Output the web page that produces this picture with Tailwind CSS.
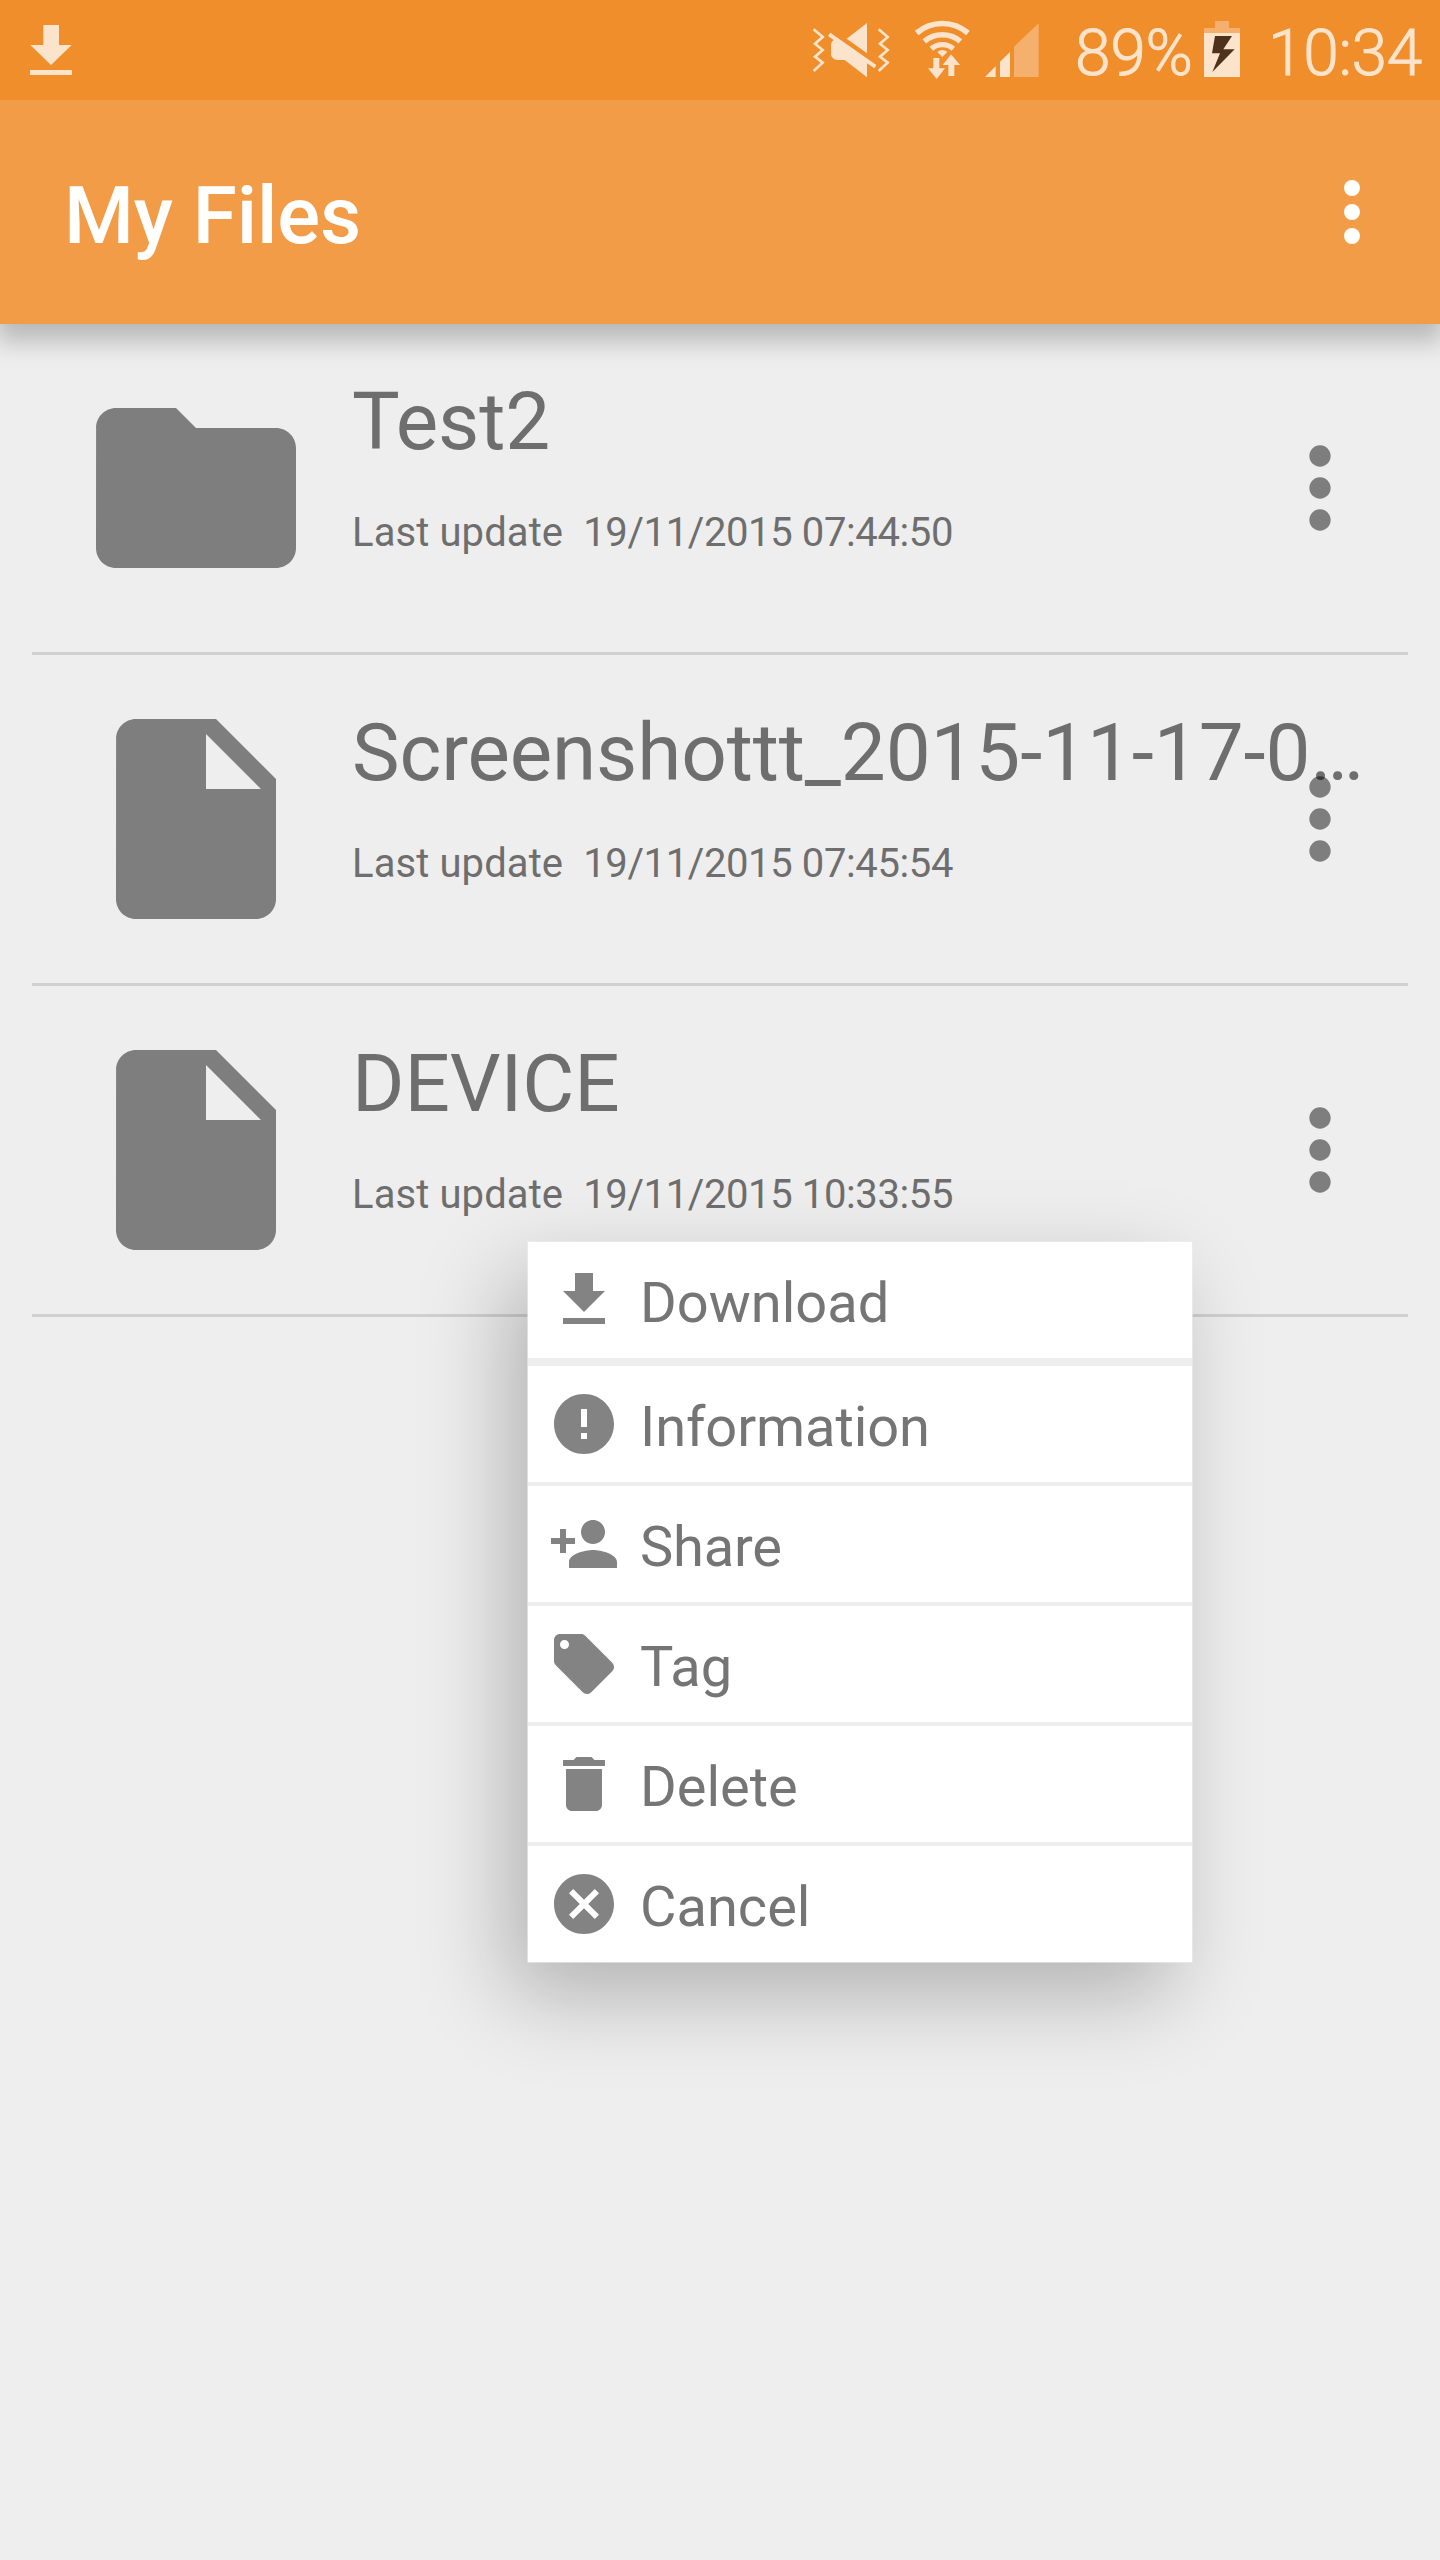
<!DOCTYPE html>
<html lang="en">
<head>
<meta charset="utf-8">
<title>My Files</title>
<script src="https://cdn.jsdelivr.net/npm/@tailwindcss/browser@4"></script>
</head>
<body class="bg-[#eeeeee] font-['Roboto',sans-serif]">
<svg class="hidden">
  <symbol id="file" viewBox="0 0 24 24"><path d="M6 2c-1.1 0-1.99.9-1.99 2L4 20c0 1.1.89 2 1.99 2H18c1.1 0 2-.9 2-2V8l-6-6H6zm7 7V3.5L18.5 9H13z"/></symbol>
  <symbol id="more" viewBox="0 0 24 24"><circle cx="12" cy="6" r="2"/><circle cx="12" cy="12" r="2"/><circle cx="12" cy="18" r="2"/></symbol>
</svg>
<div class="relative w-[1440px] h-[2560px] overflow-hidden">
  <header class="relative z-10 shadow-[0_13px_24px_4px_rgba(0,0,0,0.23)]">
    <div class="flex h-[100px] items-center bg-[#f08e2b] text-[#fce3cb]">
      <svg class="ml-[30px] w-[42px] h-[60px]" viewBox="90 60 126 180" fill="currentColor"><path d="M130 75h47v60h38l-62 60-62-60h39zM90 210h126v15H90z"/></svg>
      <svg class="ml-auto w-[78px] h-[60px]" viewBox="66 60 234 180" fill="currentColor">
        <path fill="none" stroke="currentColor" stroke-width="8" d="M71 88l27 23-23 20 23 19-23 20 23 18-27 25M266 88l27 23-23 20 23 19-23 20 23 18-27 25"/>
        <path d="M231 69v91l-61-44zM121 98l138 97-6 10-22-15v42l-67-52h-20c-14 0-21-8-21-20v-24c0-7 3-12 8-16l-17-12z"/>
      </svg>
      <svg class="ml-6 w-14 h-[60px]" viewBox="372 60 168 180" fill="none" stroke="currentColor">
        <path stroke-width="17" d="M380 99a118 118 0 0 1 154 0M403 124a84 84 0 0 1 108 0"/>
        <path stroke-width="16" d="M424 146a51 51 0 0 1 66 0"/>
        <path stroke="none" fill="currentColor" d="M442 156q15-12 30 0l-15 15zM430 174h18v31h17l-25 32-26-32h16zM475 228v-33h-17l25-32 27 32h-17v33z"/>
      </svg>
      <svg class="ml-[14px] w-14 h-[60px]" viewBox="582 60 168 180" fill="currentColor"><path d="M585 231l32-32v32zM630 231v-46l30-29v75z"/><path fill="#f6b06d" d="M672 231v-91l74-70v161z"/></svg>
      <span class="w-[164px] pl-[35px] pt-2 text-[64px] leading-[76px] font-light tracking-[-0.2px] [-webkit-text-stroke:1px_#fce3cb]">89%</span>
      <svg class="w-9 h-[60px]" viewBox="492 60 108 180"><path fill="#f6b06d" d="M525 63h42v21h33v15H492V84h33z"/><path fill="#fce3cb" d="M492 99h108v132H492z"/><path fill="#4e331a" d="M525 108h51l-26 40h34l-67 68 23-56h-24z"/></svg>
      <span class="w-[200px] pl-[28px] pt-2 text-[64px] leading-[76px] font-light tracking-[-0.3px] [-webkit-text-stroke:1px_#fce3cb]">10:34</span>
    </div>
    <div class="flex h-[224px] items-center justify-between bg-[#f29c47] pl-16 pr-[40px] text-white">
      <h1 class="pt-2 text-[80px] leading-[96px] font-medium tracking-[-0.1px]">My Files</h1>
      <svg class="w-24 h-24" viewBox="0 0 24 24" fill="currentColor"><use href="#more"/></svg>
    </div>
  </header>

  <main class="px-8 text-[#6e6e6e]">
    <div class="flex h-[331px] border-b-[3px] border-[#d0d0d0] pl-11">
      <svg class="mt-11 w-[240px] h-[240px] shrink-0 text-[#7e7e7e]" viewBox="0 0 24 24" fill="currentColor"><path d="M10 4H4c-1.1 0-1.99.9-1.99 2L2 18c0 1.1.9 2 2 2h16c1.1 0 2-.9 2-2V8c0-1.1-.9-2-2-2h-8l-2-2z"/></svg>
      <div class="ml-9 w-[1012px] shrink-0 pt-[50px]">
        <div class="text-[80px] leading-[96px] tracking-[-0.12px]">Test2</div>
        <div class="mt-[39px] text-[40px] leading-[48px] whitespace-pre tracking-[0.1px]">Last update  <span class="tracking-[-0.38px]">19/11/2015 07:44:50</span></div>
      </div>
      <svg class="-ml-[108px] mt-[100px] w-32 h-32 shrink-0 fill-black/47"><use href="#more"/></svg>
    </div>
    <div class="flex h-[331px] border-b-[3px] border-[#d0d0d0] pl-11">
      <svg class="mt-11 w-[240px] h-[240px] shrink-0 fill-[#7e7e7e]"><use href="#file"/></svg>
      <div class="ml-9 w-[1012px] shrink-0 pt-[50px]">
        <div class="text-[80px] leading-[96px] tracking-[-0.12px]">Screenshottt_2015-11-17-0…</div>
        <div class="mt-[39px] text-[40px] leading-[48px] whitespace-pre tracking-[0.1px]">Last update  <span class="tracking-[-0.38px]">19/11/2015 07:45:54</span></div>
      </div>
      <svg class="-ml-[108px] mt-[100px] w-32 h-32 shrink-0 fill-black/47"><use href="#more"/></svg>
    </div>
    <div class="flex h-[331px] border-b-[3px] border-[#d0d0d0] pl-11">
      <svg class="mt-11 w-[240px] h-[240px] shrink-0 fill-[#7e7e7e]"><use href="#file"/></svg>
      <div class="ml-9 w-[1012px] shrink-0 pt-[50px]">
        <div class="text-[80px] leading-[96px] tracking-[-0.12px]">DEVICE</div>
        <div class="mt-[39px] text-[40px] leading-[48px] whitespace-pre tracking-[0.1px]">Last update  <span class="tracking-[-0.38px]">19/11/2015 10:33:55</span></div>
      </div>
      <svg class="-ml-[108px] mt-[100px] w-32 h-32 shrink-0 fill-black/47"><use href="#more"/></svg>
    </div>
  </main>

  <ul class="absolute left-[528px] top-[1242px] z-20 w-[664px] bg-white text-[56px] leading-[66px] text-[#757575] shadow-[0_0_0_1px_rgba(238,238,238,0.6),-20px_33px_82px_rgba(0,0,0,0.255)]">
    <li class="flex h-[124px] items-center gap-5 border-b-8 border-[#eeeeee] pl-5">
      <svg class="w-[72px] h-[72px] fill-[#838383]" viewBox="0 0 24 24"><path d="M19 9h-4V3H9v6H5l7 7 7-7zM5 18v2h14v-2H5z"/></svg>
      <span class="pt-1.5">Download</span>
    </li>
    <li class="flex h-[120px] items-center gap-5 border-b-4 border-[#eeeeee] pl-5">
      <svg class="w-[72px] h-[72px] fill-[#838383]" viewBox="0 0 24 24"><path d="M12 2C6.480 2 2 6.480 2 12s4.480 10 10 10 10-4.480 10-10S17.520 2 12 2zm1 15h-2v-2h2v2zm0-4h-2V7h2v6z"/></svg>
      <span class="pt-1.5 tracking-[-0.1px]">Information</span>
    </li>
    <li class="flex h-[120px] items-center gap-5 border-b-4 border-[#eeeeee] pl-5">
      <svg class="w-[72px] h-[72px] fill-[#838383]" viewBox="0 0 24 24"><path d="M15 12c2.210 0 4-1.790 4-4s-1.790-4-4-4-4 1.790-4 4 1.790 4 4 4zm-9-2V7H4v3H1v2h3v3h2v-3h3v-2H6zm9 4c-2.670 0-8 1.340-8 4v2h16v-2c0-2.660-5.330-4-8-4z"/></svg>
      <span class="pt-1.5 tracking-[-0.2px]">Share</span>
    </li>
    <li class="flex h-[120px] items-center gap-5 border-b-4 border-[#eeeeee] pl-5">
      <svg class="w-[72px] h-[72px] fill-[#838383]" viewBox="0 0 24 24"><path d="M21.410 11.580l-9-9C12.050 2.220 11.550 2 11 2H4c-1.100 0-2 .9-2 2v7c0 .55.220 1.050.590 1.420l9 9c.360.360.860.580 1.410.580.550 0 1.050-.220 1.410-.590l7-7c.370-.360.590-.860.590-1.410 0-.550-.230-1.060-.590-1.420zM5.500 7C4.670 7 4 6.330 4 5.500S4.670 4 5.500 4 7 4.670 7 5.500 6.330 7 5.500 7z"/></svg>
      <span class="pt-1.5">Tag</span>
    </li>
    <li class="flex h-[120px] items-center gap-5 border-b-4 border-[#eeeeee] pl-5">
      <svg class="w-[72px] h-[72px] fill-[#838383]" viewBox="0 0 24 24"><path d="M6 19c0 1.100.900 2 2 2h8c1.100 0 2-.900 2-2V7H6v12zM19 4h-3.500l-1-1h-5l-1 1H5v2h14V4z"/></svg>
      <span class="pt-1.5">Delete</span>
    </li>
    <li class="flex h-[116px] items-center gap-5 pl-5">
      <svg class="w-[72px] h-[72px] fill-[#838383]" viewBox="0 0 24 24"><path d="M12 2C6.470 2 2 6.470 2 12s4.470 10 10 10 10-4.470 10-10S17.530 2 12 2zm5 13.590L15.590 17 12 13.410 8.410 17 7 15.590 10.590 12 7 8.410 8.410 7 12 10.590 15.590 7 17 8.410 13.410 12 17 15.590z"/></svg>
      <span class="pt-1.5">Cancel</span>
    </li>
  </ul>
</div>
</body>
</html>
